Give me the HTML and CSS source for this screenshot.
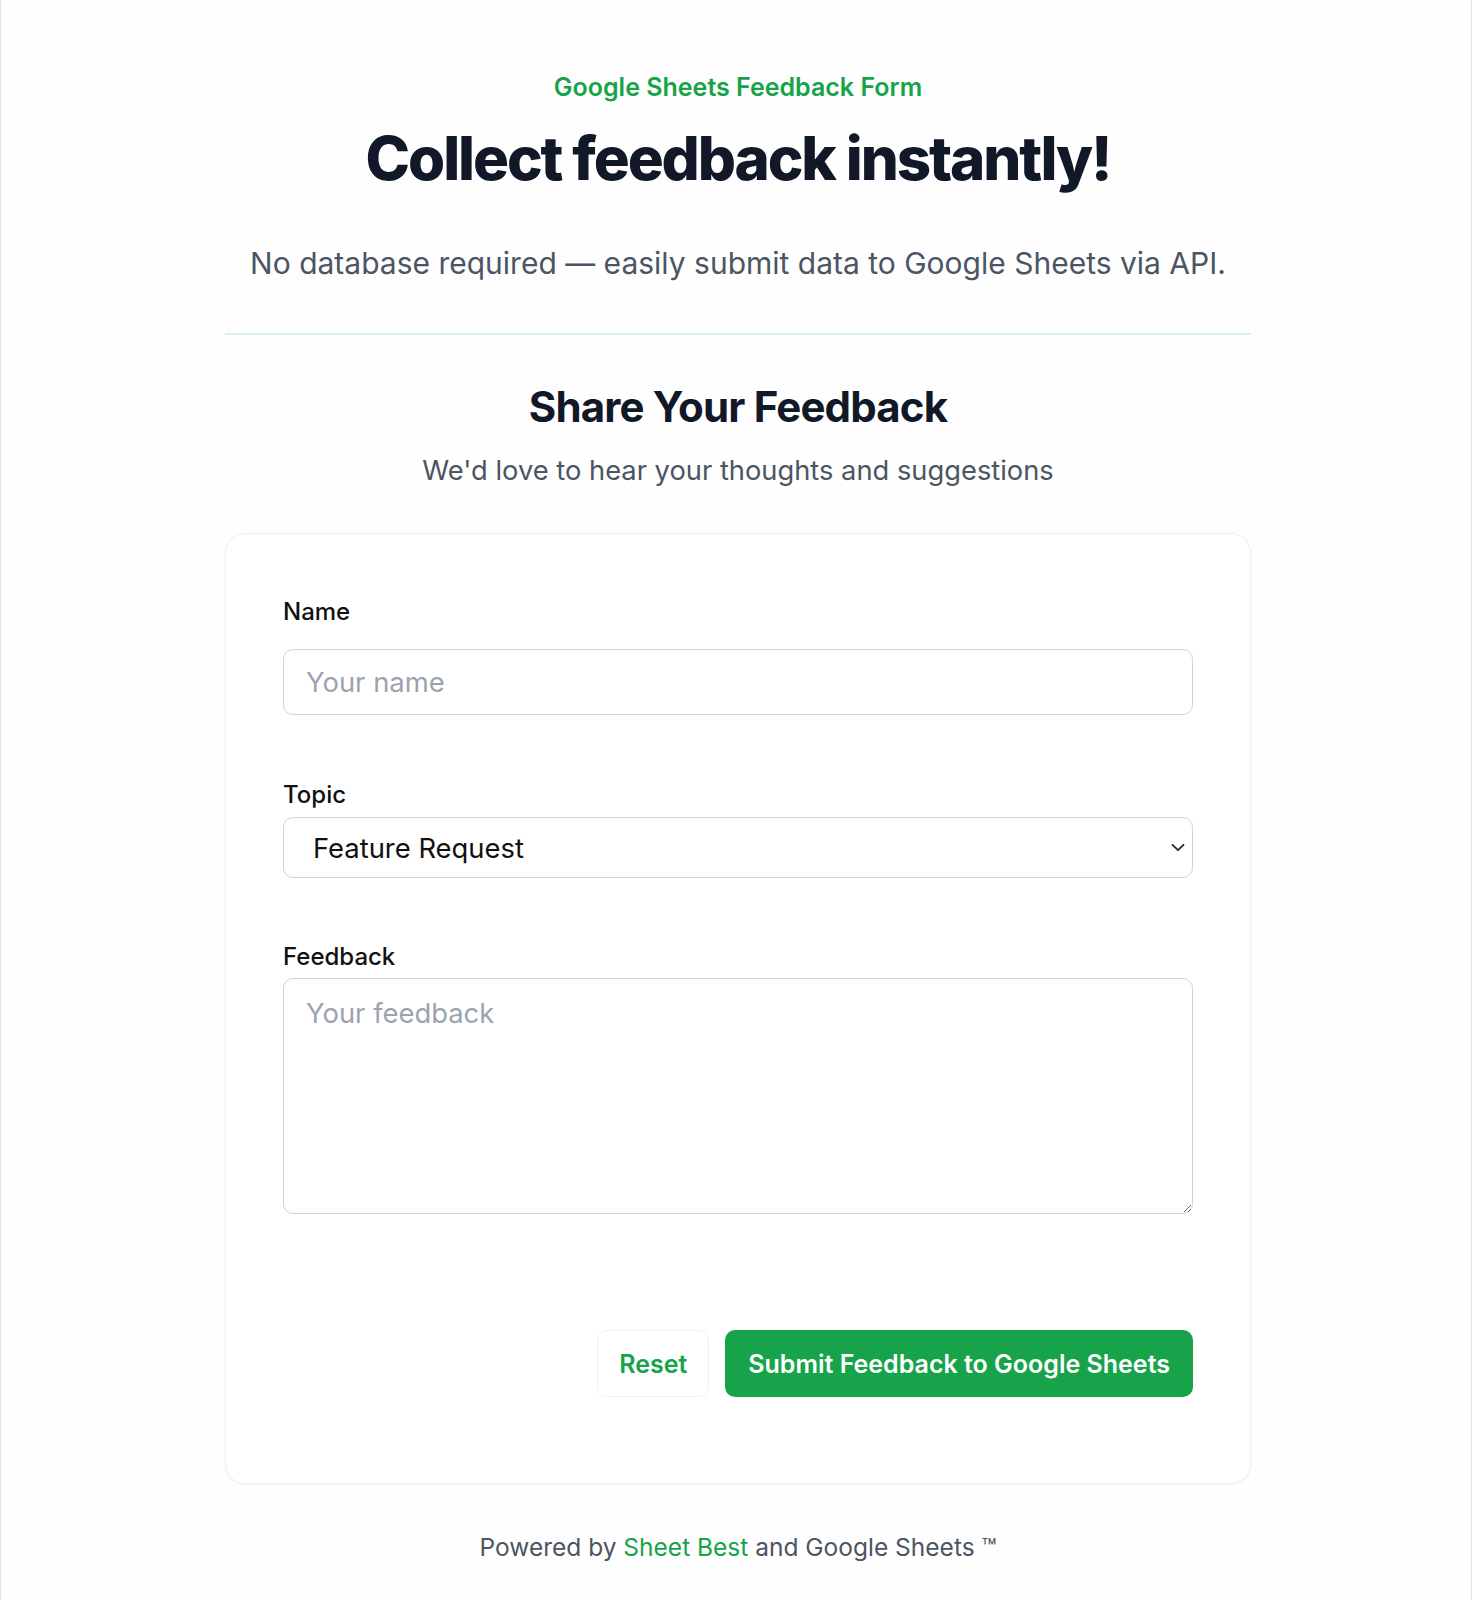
FILE: index.html
```html
<!DOCTYPE html>
<html lang="en">
<head>
<meta charset="utf-8">
<title>Google Sheets Feedback Form</title>
<link rel="stylesheet" href="styles.css">
</head>
<body>
<div class="page">
  <main class="container">
    <header class="hero">
      <p class="eyebrow">Google Sheets Feedback Form</p>
      <h1 class="title">Collect feedback instantly!</h1>
      <p class="lead">No database required — easily submit data to Google Sheets via API.</p>
    </header>
    <hr class="divider">
    <section class="intro">
      <h2 class="section-title">Share Your Feedback</h2>
      <p class="section-sub">We'd love to hear your thoughts and suggestions</p>
    </section>
    <form class="card">
      <div class="field field-name">
        <label class="label" for="name">Name</label>
        <input class="input" id="name" type="text" placeholder="Your name">
      </div>
      <div class="field field-topic">
        <label class="label" for="topic">Topic</label>
        <div class="select-wrap">
          <select class="select" id="topic">
            <option>Feature Request</option>
            <option>Bug Report</option>
            <option>General Feedback</option>
          </select>
          <svg class="chevron" width="14" height="9" viewBox="0 0 14 9" aria-hidden="true"><path d="M1.5 1.8l5.5 5.4 5.5-5.4" fill="none" stroke="#1f2937" stroke-width="1.8" stroke-linecap="round" stroke-linejoin="round"/></svg>
        </div>
      </div>
      <div class="field field-feedback">
        <label class="label" for="feedback">Feedback</label>
        <textarea class="textarea" id="feedback" placeholder="Your feedback"></textarea>
      </div>
      <div class="actions">
        <button type="reset" class="btn btn-reset">Reset</button>
        <button type="submit" class="btn btn-submit">Submit Feedback to Google Sheets</button>
      </div>
    </form>
    <footer class="footer">Powered by <a class="footer-link" href="#">Sheet Best</a> and Google Sheets ™</footer>
  </main>
</div>
</body>
</html>
```

FILE: styles.css
```css
* { box-sizing: border-box; }
html, body { margin: 0; padding: 0; background: #ffffff; }
body {
  font-family: Inter, "Noto Sans", "Liberation Sans", sans-serif;
  color: #111827;
}
.page {
  min-height: 1600px;
  padding-left: 4px;
  border-left: 1px solid #e5e5e5;
  border-right: 1px solid #e5e5e5;
  background: #fefefe;
}
.container {
  width: 1026px;
  margin: 0 auto;
  padding-top: 71px;
  display: flex;
  flex-direction: column;
}
.hero { text-align: center; }
.eyebrow {
  margin: 0;
  font-size: 25px;
  line-height: 32px;
  font-weight: 600;
  color: #16a34a;
}
.title {
  margin: 19px 0 0;
  font-size: 60px;
  line-height: 72px;
  font-weight: 800;
  letter-spacing: -0.035em;
  color: #111827;
}
.lead {
  margin: 49px 0 0;
  font-size: 30px;
  line-height: 40px;
  color: #4b5563;
}
.divider {
  margin: 50px 0 0;
  border: 0;
  height: 2px;
  background: #dcf2ea;
}
.intro { text-align: center; margin-top: 47px; }
.section-title {
  margin: 0;
  font-size: 42px;
  line-height: 50px;
  font-weight: 700;
  letter-spacing: -0.02em;
  color: #111827;
}
.section-sub {
  margin: 21px 0 0;
  font-size: 27.3px;
  line-height: 36px;
  color: #4b5563;
}
.card {
  margin-top: 44px;
  background: #ffffff;
  border: 1px solid #f0f0f1;
  border-radius: 20px;
  box-shadow: 0 1px 3px rgba(0,0,0,0.04);
  padding: 62px 57px 86px;
  display: flex;
  flex-direction: column;
}
.field { display: flex; flex-direction: column; }
.label {
  font-size: 24px;
  line-height: 32px;
  font-weight: 500;
  color: #111111;
}
.field-name .label { margin-bottom: 21px; }
.field-topic { margin-top: 64px; }
.field-topic .label { margin-bottom: 6px; }
.field-feedback { margin-top: 63px; }
.field-feedback .label { margin-bottom: 5px; }
.input, .select, .textarea {
  width: 100%;
  font-family: inherit;
  border: 1px solid #d4d4d8;
  border-radius: 10px;
  background: #ffffff;
  color: #111111;
  outline: none;
}
.input {
  height: 66px;
  padding: 0 22px;
  font-size: 27.4px;
}
.input::placeholder, .textarea::placeholder { color: #9ca3af; }
.select-wrap { position: relative; }
.select {
  height: 61px;
  padding: 0 60px 0 29px;
  font-size: 27.4px;
  appearance: none;
  -webkit-appearance: none;
}
.chevron {
  position: absolute;
  right: 8px;
  top: 26px;
  pointer-events: none;
}
.textarea {
  height: 236px;
  padding: 16px 22px;
  font-size: 27.4px;
  line-height: 36px;
  resize: vertical;
}
.actions {
  margin-top: 116px;
  display: flex;
  justify-content: flex-end;
  gap: 16px;
}
.btn {
  height: 67px;
  font-family: inherit;
  font-size: 25px;
  font-weight: 600;
  border-radius: 10px;
  cursor: pointer;
}
.btn-reset {
  padding: 0 21px;
  background: #ffffff;
  color: #16a34a;
  border: 1px solid #f1f1f2;
}
.btn-submit {
  padding: 0 23px;
  background: #16a34a;
  color: #ffffff;
  border: 0;
}
.footer {
  margin-top: 46px;
  text-align: center;
  font-size: 24.5px;
  line-height: 34px;
  color: #4b5563;
}
.footer-link { color: #16a34a; text-decoration: none; }
```
